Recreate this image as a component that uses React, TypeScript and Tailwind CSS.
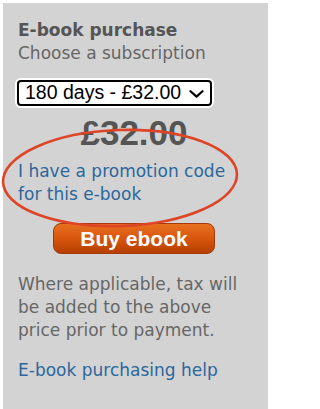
import { useState } from 'react'

const options = [
  { days: 30, price: '£12.00' },
  { days: 90, price: '£22.00' },
  { days: 180, price: '£32.00' },
  { days: 365, price: '£48.00' },
]

export default function App() {
  const [days, setDays] = useState(180)
  const current = options.find(o => o.days === days) ?? options[2]

  return (
    <div className="relative h-[409px] w-[268px] overflow-hidden bg-white pt-[3px] pl-[3px]">
      <div className="h-[406px] w-[265px] bg-[#d3d3d3] pl-[15px] pr-[18px] pt-[16px] font-['DejaVu_Sans',Verdana,sans-serif] text-[17px] leading-[23px]">
        <h2 className="font-bold text-[#555]">E-book purchase</h2>
        <p className="text-[#666]">Choose a subscription</p>

        <div className="relative mt-[15px] -ml-px w-[195px]">
          <select
            value={days}
            onChange={e => setDays(Number(e.target.value))}
            className="block h-[26px] w-full appearance-none rounded-[4px] border-2 border-black bg-white pl-[6px] font-['Liberation_Sans',Arial,sans-serif] text-[19.5px] leading-none text-black shadow-[0_0_0_2px_#fff] outline-none"
          >
            {options.map(o => (
              <option key={o.days} value={o.days}>{o.days} days - {o.price}</option>
            ))}
          </select>
          <svg className="pointer-events-none absolute right-[8px] top-[10px]" width="15" height="8" viewBox="0 0 15 8" fill="none">
            <path d="M1.5 1.2 L7.5 6.6 L13.5 1.2" stroke="#000" strokeWidth="2.2" strokeLinecap="round" strokeLinejoin="round" />
          </svg>
        </div>

        <div className="mt-[9px] text-center font-['Liberation_Sans',Arial,sans-serif] text-[35px] font-bold leading-none text-[#555]">
          {current.price}
        </div>

        <a href="#" className="mt-[10px] block text-[#2b679c]">
          I have a promotion code for this e-book
        </a>

        <button className="mx-auto mt-[17px] flex h-[31px] w-[162px] items-center justify-center rounded-[8px] border border-[#a33a05] bg-gradient-to-b from-[#e8701f] via-[#d8560e] to-[#b53f02] font-['Liberation_Sans',Arial,sans-serif] text-[21px] font-bold leading-none text-white">
          Buy ebook
        </button>

        <p className="mt-[19px] text-[#666]">
          Where applicable, tax will be added to the above price prior to payment.
        </p>

        <a href="#" className="mt-[17px] block text-[#2b679c]">
          E-book purchasing help
        </a>
      </div>

      {/* red annotation ring drawn over the promo link */}
      <svg className="pointer-events-none absolute left-0 top-0" width="268" height="409" viewBox="0 0 268 409" fill="none">
        <ellipse cx="120" cy="178" rx="117" ry="48" stroke="#dd4526" strokeWidth="2.6" transform="rotate(-2 120 178)" />
      </svg>
    </div>
  )
}
